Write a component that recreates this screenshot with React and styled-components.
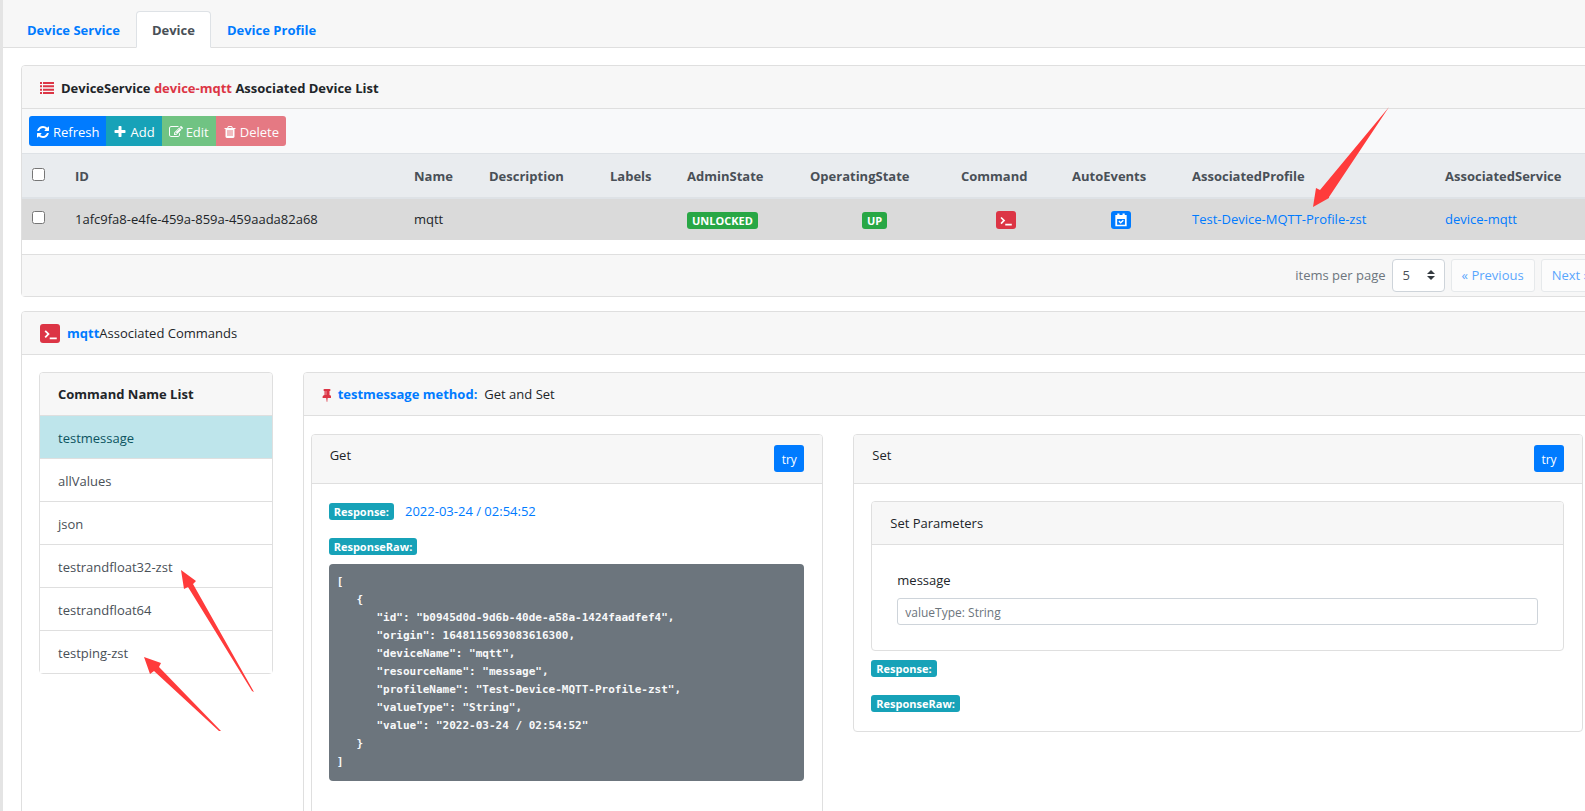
import React, { useState } from 'react'
import styled, { createGlobalStyle, css } from 'styled-components'

const commands = ['testmessage', 'allValues', 'json', 'testrandfloat32-zst', 'testrandfloat64', 'testping-zst']

const rawResponse = [
    {
        id: 'b0945d0d-9d6b-40de-a58a-1424faadfef4',
        origin: '1648115693083616300',
        deviceName: 'mqtt',
        resourceName: 'message',
        profileName: 'Test-Device-MQTT-Profile-zst',
        valueType: 'String',
        value: '2022-03-24 / 02:54:52',
    },
]

// origin does not fit in a js number, so it is kept as text and unquoted here
const rawText = JSON.stringify(rawResponse, null, 3).replace(/"(\d{19})"/, '$1')

const paths = {
    list: 'M0 128h256v256h-256zM384 128h1408v256h-1408zM0 554h256v256h-256zM384 554h1408v256h-1408zM0 980h256v256h-256zM384 980h1408v256h-1408zM0 1406h256v256h-256zM384 1406h1408v256h-1408z',
    refresh: 'M1639 1056q0 5-1 7-64 268-268 434.5t-478 166.5q-146 0-282.5-55t-243.5-157l-129 129q-19 19-45 19t-45-19-19-45v-448q0-26 19-45t45-19h448q26 0 45 19t19 45-19 45l-137 137q71 66 161 102t187 36q134 0 250-65t186-179q11-17 53-117 8-23 30-23h192q13 0 22.5 9.5t9.5 22.5zm25-800v448q0 26-19 45t-45 19h-448q-26 0-45-19t-19-45 19-45l138-138q-148-137-349-137-134 0-250 65t-186 179q-11 17-53 117-8 23-30 23h-199q-13 0-22.5-9.5t-9.5-22.5v-7q65-268 270-434.5t480-166.5q146 0 284 55.5t245 156.5l130-129q19-19 45-19t45 19 19 45z',
    plus: 'M1600 736v192q0 40-28 68t-68 28h-416v416q0 40-28 68t-68 28h-192q-40 0-68-28t-28-68v-416h-416q-40 0-68-28t-28-68v-192q0-40 28-68t68-28h416v-416q0-40 28-68t68-28h192q40 0 68 28t28 68v416h416q40 0 68 28t28 68z',
    edit: 'M888 1184l116-116-152-152-116 116v56h96v96h56zm440-720q-16-16-33 1l-350 350q-17 17-1 33t33-1l350-350q17-17 1-33zm80 594v190q0 119-84.5 203.5t-203.5 84.5h-832q-119 0-203.5-84.5t-84.5-203.5v-832q0-119 84.5-203.5t203.5-84.5h832q63 0 117 25 15 7 18 23 3 17-9 29l-49 49q-14 14-32 8-23-6-45-6h-832q-66 0-113 47t-47 113v832q0 66 47 113t113 47h832q66 0 113-47t47-113v-126q0-13 9-22l64-64q15-15 35-7t20 29zm-96-738l288 288-672 672h-288v-288zm444 132l-92 92-288-288 92-92q28-28 68-28t68 28l152 152q28 28 28 68t-28 68z',
    trash: 'M704 1376v-704q0-14-9-23t-23-9h-64q-14 0-23 9t-9 23v704q0 14 9 23t23 9h64q14 0 23-9t9-23zm256 0v-704q0-14-9-23t-23-9h-64q-14 0-23 9t-9 23v704q0 14 9 23t23 9h64q14 0 23-9t9-23zm256 0v-704q0-14-9-23t-23-9h-64q-14 0-23 9t-9 23v704q0 14 9 23t23 9h64q14 0 23-9t9-23zm-544-992h448l-48-117q-7-9-17-11h-317q-10 2-17 11zm928 32v64q0 14-9 23t-23 9h-96v948q0 83-47 143.5t-113 60.5h-832q-66 0-113-58.5t-47-141.5v-952h-96q-14 0-23-9t-9-23v-64q0-14 9-23t23-9h309l70-167q15-37 54-63t79-26h320q40 0 79 26t54 63l70 167h309q14 0 23 9t9 23z',
    pin: 'M800 864v-448q0-14-9-23t-23-9-23 9-9 23v448q0 14 9 23t23 9 23-9 9-23zm672 352q0 26-19 45t-45 19h-429l-51 483q-2 12-10.5 20.5t-20.5 8.5h-1q-27 0-32-27l-76-485h-404q-26 0-45-19t-19-45q0-123 78.5-221.5t177.5-98.5v-512q-52 0-90-38t-38-90 38-90 90-38h640q52 0 90 38t38 90-38 90-90 38v512q99 0 177.5 98.5t78.5 221.5z',
    // fat versions of terminal and calendar, they sit inside small badges
    terminal: 'M200 560L360 400L860 900L360 1400L200 1240L540 900ZM860 1340h900v230h-900z',
    calendar: 'M420 60h280v200h392v-200h280v200h250v1450h-1452v-1450h250zM400 760v750h1000v-750zM560 1100l130-130 160 160 280-280 130 130-410 410z',
}

const Icon = ({ name, size = 14, box = '0 0 1792 1792' }) => (
    <Svg viewBox={box} $size={size} aria-hidden="true">
        <path d={paths[name]} fillRule="evenodd" />
    </Svg>
)

const App = () => {
    const [selected, setSelected] = useState('testmessage')
    const [message, setMessage] = useState('')

    return (
        <>
            <GlobalStyle />
            <Page>
                <Tabs>
                    <Tab href="#service">Device Service</Tab>
                    <Tab href="#device" $active>Device</Tab>
                    <Tab href="#profile">Device Profile</Tab>
                </Tabs>
                <Content>
                    <Card>
                        <CardHeader $bold>
                            <Red><Icon name="list" /></Red>
                            <span>DeviceService <Red>device-mqtt</Red> Associated Device List</span>
                        </CardHeader>
                        <Toolbar>
                            <ToolButton $bg="#007bff"><Icon name="refresh" />Refresh</ToolButton>
                            <ToolButton $bg="#17a2b8"><Icon name="plus" />Add</ToolButton>
                            <ToolButton $bg="#28a745" disabled><Icon name="edit" />Edit</ToolButton>
                            <ToolButton $bg="#dc3545" disabled><Icon name="trash" />Delete</ToolButton>
                        </Toolbar>
                        <TableWrap>
                            <Table>
                                <colgroup>
                                    <Col $w={42} />
                                    <Col $w={339} />
                                    <Col $w={75} />
                                    <Col $w={121} />
                                    <Col $w={77} />
                                    <Col $w={123} />
                                    <Col $w={151} />
                                    <Col $w={111} />
                                    <Col $w={120} />
                                    <Col $w={253} />
                                    <Col />
                                </colgroup>
                                <thead>
                                    <tr>
                                        <Th><Check aria-label="Select all devices" /></Th>
                                        <Th>ID</Th>
                                        <Th>Name</Th>
                                        <Th>Description</Th>
                                        <Th>Labels</Th>
                                        <Th>AdminState</Th>
                                        <Th>OperatingState</Th>
                                        <Th>Command</Th>
                                        <Th>AutoEvents</Th>
                                        <Th>AssociatedProfile</Th>
                                        <Th>AssociatedService</Th>
                                    </tr>
                                </thead>
                                <tbody>
                                    <tr>
                                        <Td><Check aria-label="Select mqtt" /></Td>
                                        <Td>1afc9fa8-e4fe-459a-859a-459aada82a68</Td>
                                        <Td>mqtt</Td>
                                        <Td />
                                        <Td />
                                        <Td><Badge $bg="#28a745">UNLOCKED</Badge></Td>
                                        <Td $center><Badge $bg="#28a745">UP</Badge></Td>
                                        <Td $center>
                                            <IconButton $bg="#dc3545" aria-label="Commands"><Icon name="terminal" size={13} /></IconButton>
                                        </Td>
                                        <Td $center>
                                            <IconButton $bg="#007bff" aria-label="Auto events"><Icon name="calendar" /></IconButton>
                                        </Td>
                                        <Td><Link href="#profile">Test-Device-MQTT-Profile-zst</Link></Td>
                                        <Td><Link href="#service">device-mqtt</Link></Td>
                                    </tr>
                                </tbody>
                            </Table>
                        </TableWrap>
                        <CardFooter>
                            <label htmlFor="pageSize">items per page</label>
                            <SelectWrap>
                                <Select id="pageSize" defaultValue="5">
                                    <option>5</option>
                                    <option>10</option>
                                    <option>15</option>
                                </Select>
                                <Caret viewBox="0 0 4 5" aria-hidden="true">
                                    <path d="M2 0L0 2h4zm0 5L0 3h4z" />
                                </Caret>
                            </SelectWrap>
                            <PageButton disabled>« Previous</PageButton>
                            <PageButton disabled>Next »</PageButton>
                        </CardFooter>
                    </Card>

                    <Card>
                        <CardHeader>
                            <IconBox><Icon name="terminal" size={14} /></IconBox>
                            <span><Blue>mqtt</Blue>Associated Commands</span>
                        </CardHeader>
                        <Columns $pad={17}>
                            <Card $span={2}>
                                <CardHeader $bold>Command Name List</CardHeader>
                                <List>
                                    {commands.map((name) => (
                                        <li key={name}>
                                            <ListButton $active={name === selected} onClick={() => setSelected(name)}>
                                                {name}
                                            </ListButton>
                                        </li>
                                    ))}
                                </List>
                            </Card>
                            <Card $span={10}>
                                <CardHeader>
                                    <Red><Icon name="pin" size={14} box="256 0 1152 1792" /></Red>
                                    <Blue>{selected} method:</Blue>
                                    <span>Get and Set</span>
                                </CardHeader>
                                <Columns $pad={7}>
                                    <GetCard $span={5}>
                                        <CardHeader $tall>
                                            <span>Get</span>
                                            <TryButton>try</TryButton>
                                        </CardHeader>
                                        <CardBody>
                                            <Response>
                                                <Badge $bg="#17a2b8">Response:</Badge>
                                                <Blue $light>2022-03-24 / 02:54:52</Blue>
                                            </Response>
                                            <Response><Badge $bg="#17a2b8">ResponseRaw:</Badge></Response>
                                            <Raw>{rawText}</Raw>
                                        </CardBody>
                                    </GetCard>
                                    <Card $span={7}>
                                        <CardHeader $tall>
                                            <span>Set</span>
                                            <TryButton>try</TryButton>
                                        </CardHeader>
                                        <CardBody>
                                            <Card>
                                                <CardHeader>Set Parameters</CardHeader>
                                                <Form>
                                                    <label htmlFor="message">message</label>
                                                    <Input
                                                        id="message"
                                                        placeholder="valueType: String"
                                                        value={message}
                                                        onChange={(e) => setMessage(e.target.value)}
                                                    />
                                                </Form>
                                            </Card>
                                            <Response $after><Badge $bg="#17a2b8">Response:</Badge></Response>
                                            <Response><Badge $bg="#17a2b8">ResponseRaw:</Badge></Response>
                                        </CardBody>
                                    </Card>
                                </Columns>
                            </Card>
                        </Columns>
                    </Card>
                </Content>
                <Arrows viewBox="0 0 1585 811" aria-hidden="true">
                    <path d="M1389 107L1329 197L1329 198L1313 207L1316 188L1320 190Z" />
                    <path d="M181 570L196 581L193 584L254 692L252 691L188 587L184 589Z" />
                    <path d="M144 657L161 663L159 667L221 731L219 731L154 671L150 674Z" />
                </Arrows>
            </Page>
        </>
    )
}

export default App

const GlobalStyle = createGlobalStyle`
    * {
        box-sizing: border-box;
    }
    body {
        margin: 0;
        overflow: hidden;
        background-color: #fff;
        color: #212529;
        font-family: 'Open Sans', 'Noto Sans', sans-serif;
        font-size: 13px;
        line-height: 21px;
    }
    button, input, select {
        font-family: inherit;
        font-size: inherit;
        line-height: inherit;
    }
    button {
        cursor: pointer;
    }
`
// the page is a bit wider than the window, the right edge is scrolled off
const Page = styled.div`
    width: calc(100% + 42px);
    border-left: 3px solid #e4e4e4;
`
const Svg = styled.svg`
    flex: none;
    height: ${(p) => p.$size}px;
    fill: currentColor;
`
const Tabs = styled.nav`
    display: flex;
    padding: 11px 8px 0;
    background-color: #f7f7f7;
    border-bottom: 1px solid #dfdfdf;
`
const Tab = styled.a`
    padding: 8px 15px 6px;
    margin-bottom: -1px;
    border: 1px solid transparent;
    border-radius: 4px 4px 0 0;
    color: #007bff;
    font-weight: 700;
    text-decoration: none;

    ${(p) => p.$active && css`
        color: #495057;
        background-color: #fff;
        border-color: #dee2e6 #dee2e6 #fff;
    `}
`
const Content = styled.main`
    display: flex;
    flex-direction: column;
    gap: 14px;
    padding: 17px 18px;
`
const Card = styled.section`
    grid-column: span ${(p) => p.$span || 1};
    align-self: start;
    width: 100%;
    min-width: 0;
    background-color: #fff;
    border: 1px solid #dfdfdf;
    border-radius: 4px;
`
const GetCard = styled(Card)`
    min-height: 400px;
`
const CardHeader = styled.div`
    display: flex;
    align-items: ${(p) => (p.$tall ? 'flex-start' : 'center')};
    justify-content: ${(p) => (p.$tall ? 'space-between' : 'flex-start')};
    gap: 7px;
    height: ${(p) => (p.$tall ? 49 : 43)}px;
    padding: ${(p) => (p.$tall ? '10px 18px' : '12px 18px 10px')};
    background-color: #f7f7f7;
    border-bottom: 1px solid #dfdfdf;
    border-radius: 3px 3px 0 0;
    font-weight: ${(p) => (p.$bold ? 700 : 400)};
`
const CardBody = styled.div`
    padding: 17px 18px 17px 17px;
`
const Red = styled.span`
    display: inline-flex;
    color: #dc3545;
`
const Blue = styled.span`
    color: #007bff;
    font-weight: ${(p) => (p.$light ? 400 : 700)};
`
const Toolbar = styled.div`
    display: flex;
    padding: 7px;
    background-color: #f8f9fa;
`
const ToolButton = styled.button`
    display: flex;
    align-items: center;
    gap: 3px;
    height: 30px;
    padding: 2px 7px 0;
    border: none;
    color: #fff;
    background-color: ${(p) => p.$bg};
    opacity: ${(p) => (p.disabled ? 0.65 : 1)};
    font-size: 13px;

    &:first-child {
        border-radius: 3px 0 0 3px;
    }
    &:last-child {
        border-radius: 0 3px 3px 0;
    }
`
const TableWrap = styled.div`
    padding-bottom: 14px;
`
const Table = styled.table`
    width: 100%;
    table-layout: fixed;
    border-collapse: collapse;
`
const Col = styled.col`
    width: ${(p) => (p.$w ? p.$w + 'px' : 'auto')};
`
const Th = styled.th`
    height: 44px;
    padding: 2px 0 0 11px;
    text-align: left;
    color: #495057;
    background-color: #e9ecef;
    border-top: 1px solid #dee2e6;
    border-bottom: 2px solid #dee2e6;

    &:first-child {
        padding: 0 0 2px 10px;
    }
`
const Td = styled.td`
    height: 42px;
    padding: 0 11px;
    text-align: ${(p) => (p.$center ? 'center' : 'left')};
    background-color: #dadada;

    &:first-child {
        padding: 0 0 3px 10px;
    }
`
const Check = styled.input.attrs({ type: 'checkbox' })`
    display: block;
    width: 13px;
    height: 13px;
    margin: 0;
`
const Badge = styled.span`
    display: inline-block;
    padding: 0 5px;
    border-radius: 3px;
    color: #fff;
    background-color: ${(p) => p.$bg};
    font-size: 11px;
    font-weight: 700;
    line-height: 17px;
    vertical-align: middle;
`
const IconButton = styled.button`
    display: inline-flex;
    align-items: center;
    justify-content: center;
    width: 20px;
    height: 18px;
    padding: 0;
    border: none;
    border-radius: 3px;
    color: #fff;
    background-color: ${(p) => p.$bg};
    vertical-align: middle;
`
const IconBox = styled.span`
    display: flex;
    align-items: center;
    justify-content: center;
    width: 20px;
    height: 19px;
    border-radius: 3px;
    color: #fff;
    background-color: #dc3545;
`
const Link = styled.a`
    color: #007bff;
    text-decoration: none;
`
const CardFooter = styled.div`
    display: flex;
    align-items: center;
    justify-content: flex-end;
    gap: 6px;
    height: 42px;
    padding: 0 7px;
    color: #6c757d;
    background-color: #f7f7f7;
    border-top: 1px solid #dfdfdf;
`
const SelectWrap = styled.div`
    position: relative;
`
const Select = styled.select`
    display: block;
    appearance: none;
    width: 53px;
    height: 33px;
    padding: 0 10px;
    border: 1px solid #ced4da;
    border-radius: 4px;
    color: #495057;
    background-color: #fff;
`
const Caret = styled.svg`
    position: absolute;
    right: 10px;
    top: 11px;
    width: 8px;
    height: 10px;
    fill: #343a40;
    pointer-events: none;
`
const PageButton = styled.button`
    height: 33px;
    padding: 0 10px;
    border: 1px solid #dee2e6;
    border-radius: 3px;
    color: #007bff;
    background-color: #fff;
    opacity: 0.65;
`
const Columns = styled.div`
    display: grid;
    grid-template-columns: repeat(12, 1fr);
    column-gap: 30px;
    padding: ${(p) => (p.$pad === 7 ? '18px 7px' : '17px')};
`
const List = styled.ul`
    margin: 0;
    padding: 0;
    list-style: none;

    li + li {
        border-top: 1px solid #dfdfdf;
    }
`
const ListButton = styled.button`
    display: block;
    width: 100%;
    height: 42px;
    padding: 3px 18px 0;
    border: none;
    text-align: left;
    color: ${(p) => (p.$active ? '#0c5460' : '#495057')};
    background-color: ${(p) => (p.$active ? '#bee5eb' : '#fff')};
`
const TryButton = styled.button`
    width: 30px;
    height: 27px;
    padding: 2px 0 0;
    border: none;
    border-radius: 3px;
    color: #fff;
    background-color: #007bff;
    font-size: 12px;
`
const Response = styled.div`
    display: flex;
    align-items: center;
    gap: 11px;
    height: 21px;
    margin-top: ${(p) => (p.$after ? 7 : 0)}px;

    & + & {
        margin-top: 14px;
    }
`
const Raw = styled.pre`
    margin: 7px 0 0;
    padding: 9px 8px 10px;
    border-radius: 4px;
    color: #f8f9fa;
    background-color: #6c757d;
    font-family: 'DejaVu Sans Mono', monospace;
    font-size: 11px;
    font-weight: 700;
    line-height: 18px;
`
const Form = styled.form`
    display: flex;
    flex-direction: column;
    gap: 7px;
    padding: 25px;
`
const Input = styled.input`
    height: 27px;
    padding: 2px 7px 0;
    border: 1px solid #ced4da;
    border-radius: 3px;
    font-size: 12px;

    &::placeholder {
        color: #6c757d;
    }
`
const Arrows = styled.svg`
    position: absolute;
    left: 0;
    top: 0;
    width: 1585px;
    height: 811px;
    fill: #ff3b3b;
    pointer-events: none;
`
